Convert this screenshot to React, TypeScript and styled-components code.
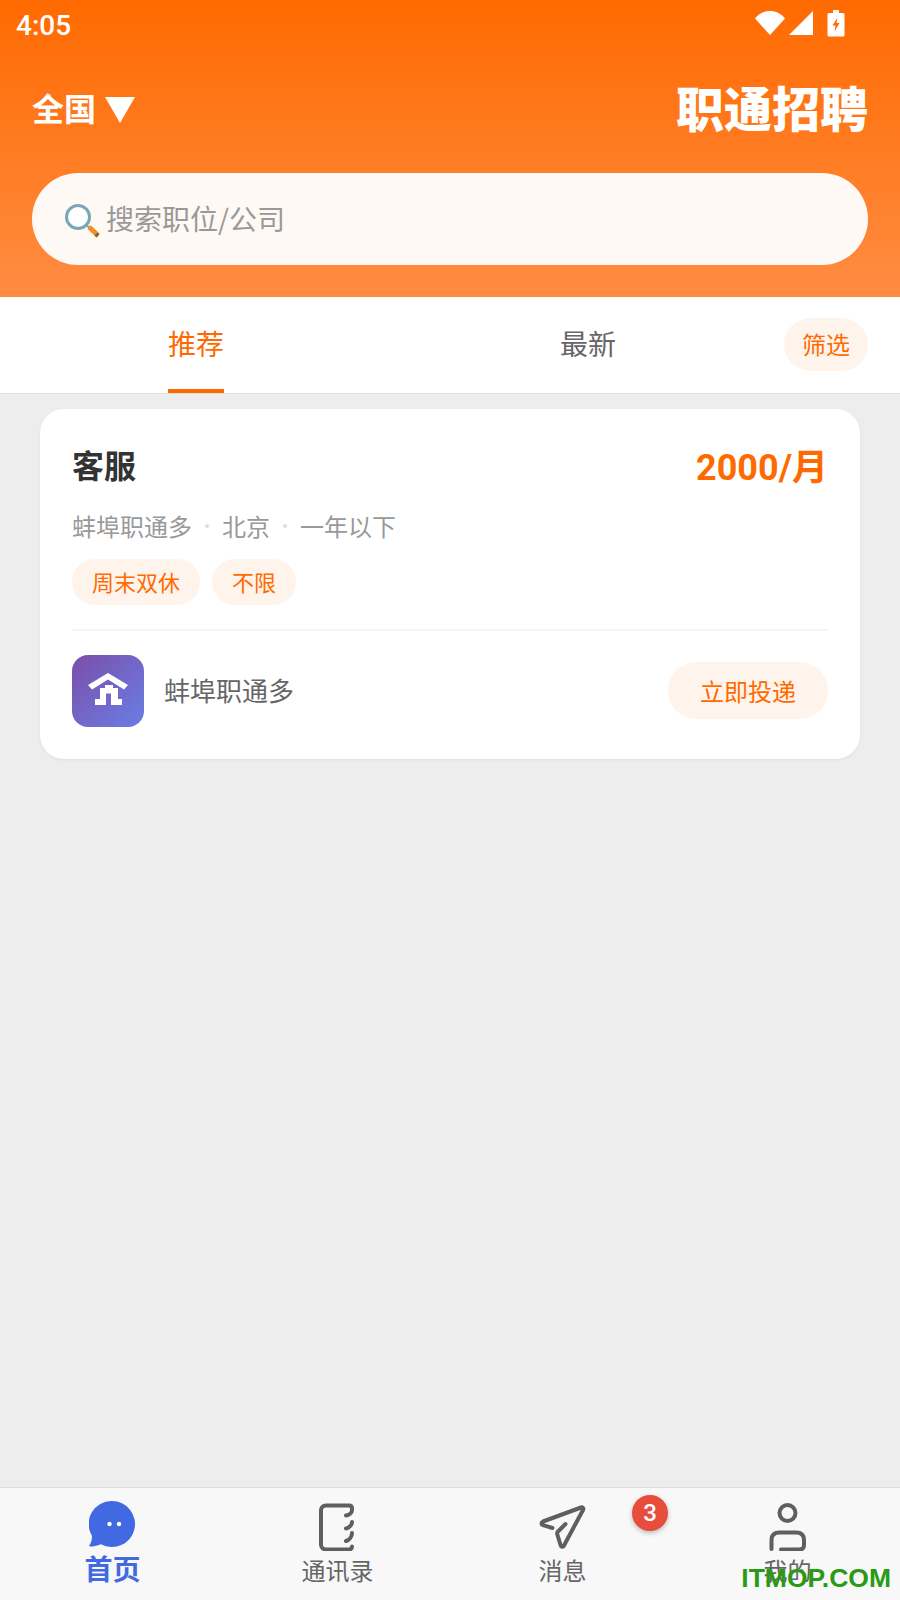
import React from "react";
import styled, { createGlobalStyle } from "styled-components";

const Global = createGlobalStyle`
  html, body { margin: 0; padding: 0; }
  body { font-family: "Noto Sans CJK SC", "Roboto", sans-serif; }
  * { box-sizing: border-box; }
`;

const Page = styled.div`
  position: relative;
  width: 900px;
  height: 1600px;
  display: flex;
  flex-direction: column;
  background: #ededed;
  overflow: hidden;
`;

const Header = styled.header`
  height: 297px;
  flex: none;
  padding: 0 32px;
  background: linear-gradient(180deg, #ff6a00 0%, #ff8c42 100%);
  color: #fff;
`;

const StatusBar = styled.div`
  height: 50px;
  margin: 0 -32px;
  padding: 0 55px 0 16px;
  display: flex;
  align-items: center;
  justify-content: space-between;
`;

const Clock = styled.span`
  padding-top: 2px;
  font-family: "Roboto", sans-serif;
  font-size: 28px;
  font-weight: 500;
  line-height: 50px;
`;

const StatusIcons = styled.div`
  display: flex;
  align-items: center;
  margin-top: -4px;
`;

const TitleRow = styled.div`
  height: 120px;
  margin-top: -3px;
  display: flex;
  align-items: center;
  justify-content: space-between;
`;

const Region = styled.div`
  display: flex;
  align-items: center;
  gap: 9px;
  font-size: 32px;
  font-weight: 700;
`;

const CaretGlyph = styled.svg`
  margin-top: 6px;
`;

const Brand = styled.h1`
  margin: 0 0 2px;
  font-size: 48px;
  font-weight: 900;
  line-height: 60px;
`;

const SearchBox = styled.div`
  height: 92px;
  margin-top: 6px;
  padding: 0 32px 2px;
  display: flex;
  align-items: center;
  gap: 6px;
  border-radius: 46px;
  background: #fff9f5;
  font-size: 28px;
  color: #999;
`;

const SearchGlyph = styled.svg`
  margin-top: 6px;
`;

const Tabs = styled.nav`
  height: 97px;
  flex: none;
  padding-right: 32px;
  display: flex;
  align-items: center;
  background: #fff;
  border-bottom: 1px solid #ddd;
`;

const Tab = styled.div`
  flex: 1;
  height: 96px;
  display: flex;
  justify-content: center;
`;

const TabLabel = styled.div<{ $active?: boolean }>`
  height: 100%;
  display: flex;
  align-items: center;
  font-size: 28px;
  color: ${(p) => (p.$active ? "#ff6a00" : "#666")};
  border-bottom: 4px solid ${(p) => (p.$active ? "#ff6a00" : "transparent")};
`;

const FilterPill = styled.div`
  flex: none;
  width: 84px;
  height: 53px;
  margin-top: -1px;
  padding-bottom: 2px;
  display: flex;
  align-items: center;
  justify-content: center;
  border-radius: 27px;
  background: #fff4ec;
  color: #ff6a00;
  font-size: 24px;
`;

const Content = styled.main`
  flex: 1;
  padding: 15px 40px 0;
`;

const Card = styled.article`
  height: 350px;
  padding: 32px;
  border-radius: 24px;
  background: #fff;
  box-shadow: 0 1px 3px rgba(0, 0, 0, 0.06);
`;

const CardTop = styled.div`
  height: 46px;
  display: flex;
  align-items: center;
  justify-content: space-between;
`;

const JobTitle = styled.h2`
  margin: 0;
  font-size: 32px;
  font-weight: 700;
  color: #333;
`;

const Salary = styled.div`
  font-family: "Roboto", "Noto Sans CJK SC", sans-serif;
  font-size: 36px;
  font-weight: 700;
  color: #ff6a00;
`;

const Meta = styled.div`
  margin-top: 19px;
  height: 38px;
  display: flex;
  align-items: center;
  font-size: 24px;
  color: #999;
`;

const Dot = styled.span`
  width: 30px;
  text-align: center;
  color: #ddd;
  font-size: 18px;
`;

const TagRow = styled.div`
  margin-top: 15px;
  display: flex;
  gap: 12px;
`;

const Tag = styled.span`
  height: 46px;
  padding: 0 20px 2px;
  display: flex;
  align-items: center;
  border-radius: 23px;
  background: #fff4ec;
  color: #ff6a00;
  font-size: 22px;
`;

const Divider = styled.div`
  height: 2px;
  margin-top: 24px;
  background: #f5f5f5;
`;

const CompanyRow = styled.div`
  margin-top: 24px;
  display: flex;
  align-items: center;
`;

const Logo = styled.div`
  width: 72px;
  height: 72px;
  flex: none;
  border-radius: 16px;
  background: linear-gradient(135deg, #7b4fa8 0%, #6a7de6 100%);
`;

const Company = styled.div`
  flex: 1;
  margin-left: 20px;
  padding-bottom: 4px;
  font-size: 26px;
  color: #666;
`;

const ApplyButton = styled.button`
  width: 160px;
  height: 57px;
  margin-top: -2px;
  padding: 0;
  border: none;
  border-radius: 29px;
  background: #fff4ec;
  color: #ff6a00;
  font-family: inherit;
  font-size: 24px;
`;

const BottomNav = styled.nav`
  height: 113px;
  flex: none;
  display: grid;
  grid-template-columns: repeat(4, 1fr);
  background: #f8f8f8;
  border-top: 1px solid #ddd;
`;

const NavItem = styled.div`
  position: relative;
  display: flex;
  flex-direction: column;
  align-items: center;
  padding-top: 13px;
`;

const IconSlot = styled.div`
  height: 50px;
  display: flex;
  justify-content: center;
`;

const NavLabel = styled.span<{ $active?: boolean }>`
  font-size: ${(p) => (p.$active ? "28px" : "24px")};
  font-weight: ${(p) => (p.$active ? 700 : 400)};
  line-height: 34px;
  margin-top: ${(p) => (p.$active ? "0" : "2px")};
  color: ${(p) => (p.$active ? "#4169e1" : "#666")};
`;

const Badge = styled.span`
  position: absolute;
  top: 7px;
  left: 182px;
  width: 36px;
  height: 36px;
  display: flex;
  align-items: center;
  justify-content: center;
  border-radius: 50%;
  background: #e74c3c;
  color: #fff;
  font-family: "Roboto", sans-serif;
  font-size: 24px;
  font-weight: 500;
  box-shadow: 0 2px 5px rgba(0, 0, 0, 0.25);
`;

const Watermark = styled.div`
  position: absolute;
  right: 9px;
  bottom: 6px;
  font-family: "Liberation Sans", sans-serif;
  font-size: 26.5px;
  font-weight: 700;
  line-height: 32px;
  color: #2a9a14;
`;

const Wifi = () => (
  <svg width="30" height="26" viewBox="0 0 30 26"><path d="M0 8.500C4 3.500 9 1 15 1s11 2.500 15 7.500L15 25z" fill="#fff" /></svg>
);
const Signal = () => (
  <svg width="26" height="26" viewBox="0 0 26 26" style={{ marginLeft: 3 }}><path d="M25 1v24H1z" fill="#fff" /></svg>
);
const Battery = () => (
  <svg width="18" height="28" viewBox="0 0 18 28" style={{ marginLeft: 13 }}>
    <path d="M6 1h6v3h4a1.500 1.500 0 0 1 1.500 1.500V26a1.500 1.500 0 0 1-1.500 1.500H2A1.500 1.500 0 0 1 .5 26V5.500A1.500 1.500 0 0 1 2 4h4z" fill="#fff" />
    <path d="M10.500 8.500 5.500 16.500h3l-1 6 5-8.500h-3z" fill="#ff6a00" />
  </svg>
);

const Caret = () => (
  <CaretGlyph width="30" height="26" viewBox="0 0 30 26"><path d="M0 0h30L15 26z" fill="#fff" /></CaretGlyph>
);

const SearchIcon = () => (
  <SearchGlyph width="36" height="36" viewBox="0 0 36 36">
    <circle cx="14" cy="14" r="11.500" fill="#fff" stroke="#7aa7b5" strokeWidth="3" />
    <path d="M22 22l4 3" stroke="#7aa7b5" strokeWidth="2" />
    <path d="M25 24l9 8.500" stroke="#f28c28" strokeWidth="5" />
    <path d="M32 31l2 2" stroke="#8a5a30" strokeWidth="4" />
  </SearchGlyph>
);

const HouseLogo = () => (
  <svg width="72" height="72" viewBox="0 0 72 72">
    <path d="M16 30 36 18l20 12-4 4.500-16-10-16 10z" fill="#fff" />
    <path d="M28 44V33h5v-3h8v3h5v11h4v6h-11V38.500h-5V50H23v-6z" fill="#fff" />
  </svg>
);

const ChatIcon = () => (
  <svg width="48" height="48" viewBox="1 1 48 48">
    <path d="M24 1a23 23 0 1 1-11 43.200C9 46 5 46.500 2 46.500c-.8 0-1-.8-.6-1.300C3 43 4 40.500 4 36A23 23 0 0 1 24 1z" fill="#4169e1" />
    <circle cx="21.500" cy="24" r="2.200" fill="#fff" />
    <circle cx="31" cy="24" r="2.200" fill="#fff" />
  </svg>
);

const BookIcon = () => (
  <svg width="38" height="50" viewBox="0 0 38 50" fill="none" stroke="#5f5f5f" strokeWidth="4" strokeLinecap="round">
    <path d="M33 9c0 3-3 5-6 5.500M33 21c0 3-3 6-6 6.500M33 32c0 4-3 7-6 8" />
    <path d="M33 8.500V7.500c0-2-1-3-3-3H7c-3 0-5 2-5 5v34c0 3 2 5 5 5h23c2 0 3-1 3-3" />
  </svg>
);

const PlaneIcon = () => (
  <svg width="50" height="50" viewBox="0 0 50 50" fill="none" stroke="#5f5f5f" strokeWidth="4" strokeLinecap="round" strokeLinejoin="round">
    <path d="M27.500 23 20 30.500c-.8.800-1 1.500-.8 2.500L22.500 44c.5 2 2.500 2.500 3.500.5L45 9c1-2-.5-3-2-2.500L5 20.500c-2 .8-2 3 0 3.700L14.500 27" />
  </svg>
);

const PersonIcon = () => (
  <svg width="40" height="50" viewBox="0 0 40 50" fill="none" stroke="#5f5f5f" strokeWidth="4" strokeLinecap="round">
    <circle cx="19.500" cy="12" r="8" />
    <path d="M3.500 48V39c0-5 3-7.500 8-7.500H28c5 0 8 2.500 8 7.500v5c0 3-2 4.500-5 4.500H13" />
  </svg>
);

export default function App() {
  return (
    <Page>
      <Global />
      <Header>
        <StatusBar>
          <Clock>4:05</Clock>
          <StatusIcons>
            <Wifi />
            <Signal />
            <Battery />
          </StatusIcons>
        </StatusBar>
        <TitleRow>
          <Region>
            全国
            <Caret />
          </Region>
          <Brand>职通招聘</Brand>
        </TitleRow>
        <SearchBox>
          <SearchIcon />
          搜索职位/公司
        </SearchBox>
      </Header>
      <Tabs>
        <Tab>
          <TabLabel $active>推荐</TabLabel>
        </Tab>
        <Tab>
          <TabLabel>最新</TabLabel>
        </Tab>
        <FilterPill>筛选</FilterPill>
      </Tabs>
      <Content>
        <Card>
          <CardTop>
            <JobTitle>客服</JobTitle>
            <Salary>2000/月</Salary>
          </CardTop>
          <Meta>
            蚌埠职通多
            <Dot>·</Dot>
            北京
            <Dot>·</Dot>
            一年以下
          </Meta>
          <TagRow>
            <Tag>周末双休</Tag>
            <Tag>不限</Tag>
          </TagRow>
          <Divider />
          <CompanyRow>
            <Logo>
              <HouseLogo />
            </Logo>
            <Company>蚌埠职通多</Company>
            <ApplyButton>立即投递</ApplyButton>
          </CompanyRow>
        </Card>
      </Content>
      <BottomNav>
        <NavItem>
          <IconSlot>
            <ChatIcon />
          </IconSlot>
          <NavLabel $active>首页</NavLabel>
        </NavItem>
        <NavItem>
          <IconSlot>
            <BookIcon />
          </IconSlot>
          <NavLabel>通讯录</NavLabel>
        </NavItem>
        <NavItem>
          <IconSlot>
            <PlaneIcon />
          </IconSlot>
          <NavLabel>消息</NavLabel>
          <Badge>3</Badge>
        </NavItem>
        <NavItem>
          <IconSlot>
            <PersonIcon />
          </IconSlot>
          <NavLabel>我的</NavLabel>
        </NavItem>
      </BottomNav>
      <Watermark>ITMOP.COM</Watermark>
    </Page>
  );
}
